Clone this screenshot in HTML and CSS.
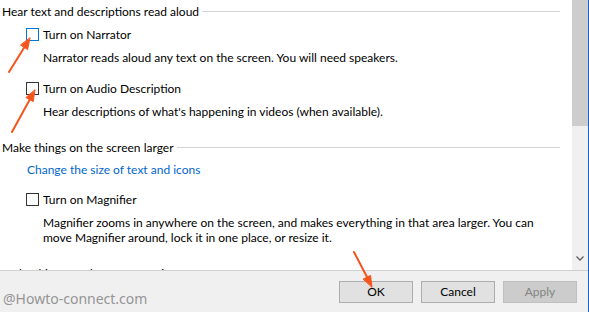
FILE: index.html
```html
<!DOCTYPE html>
<html lang="en">
<head>
  <meta charset="UTF-8">
  <title>Ease of Access</title>
  <link rel="stylesheet" href="styles.css">
</head>
<body>
<div class="window">
  <div class="content">
    <div class="panel">
      <div class="section-title first">Hear text and descriptions read aloud</div>
      <div class="option first">
        <label class="check-row"><span class="box focused"></span>Turn on Narrator</label>
        <div class="desc">Narrator reads aloud any text on the screen. You will need speakers.</div>
      </div>
      <div class="option">
        <label class="check-row"><span class="box"></span>Turn on Audio Description</label>
        <div class="desc">Hear descriptions of what's happening in videos (when available).</div>
      </div>

      <div class="section-title">Make things on the screen larger</div>
      <a href="#" class="link">Change the size of text and icons</a>
      <div class="option after-link">
        <label class="check-row"><span class="box"></span>Turn on Magnifier</label>
        <div class="desc wide">Magnifier zooms in anywhere on the screen, and makes everything in that area larger. You can move Magnifier around, lock it in one place, or resize it.</div>
      </div>

      <div class="section-title">Make things on the screen easier to see</div>
    </div>
    <div class="scrollbar">
      <div class="thumb"></div>
      <div class="track"></div>
      <div class="arrow-down">
        <svg width="8" height="5" viewBox="0 0 8 5"><path d="M0.5 0.5 L4 4 L7.5 0.5" fill="none" stroke="#606060" stroke-width="1.3"/></svg>
      </div>
    </div>
  </div>
  <div class="footer">
    <div class="watermark">@Howto-connect.com</div>
    <div class="buttons">
      <button class="btn">OK</button>
      <button class="btn">Cancel</button>
      <button class="btn" disabled>Apply</button>
    </div>
  </div>
</div>

<svg class="arrows" width="589" height="312" viewBox="0 0 589 312">
  <g stroke="#f5541d" stroke-width="2" stroke-linecap="round" fill="#f5541d">
    <line x1="9" y1="72" x2="24.5" y2="47"/>
    <polygon points="30,38 27.6,49.5 20.8,45.2" stroke-width="1"/>
    <line x1="12" y1="132" x2="29.8" y2="99.6"/>
    <polygon points="35,90 33.2,101.6 26.2,97.7" stroke-width="1"/>
    <line x1="354" y1="252" x2="367" y2="277"/>
    <polygon points="372,287 370.5,275.4 363.4,279" stroke-width="1"/>
  </g>
</svg>
</body>
</html>
```
FILE: styles.css
```css
body {
  margin: 0;
  width: 589px;
  height: 312px;
  overflow: hidden;
  position: relative;
  font-family: 'Lato', sans-serif;
  font-size: 12px;
  color: #000;
  background-color: #f0f0f0;
}
.window {
  display: flex;
  flex-direction: column;
  height: 312px;
  border-right: 1px solid #1a64c8;
  box-sizing: border-box;
}
.content {
  display: flex;
  height: 270px;
}
.panel {
  flex: 1;
  background-color: #fff;
  padding: 4px 12px 0 2px;
  overflow: hidden;
  line-height: 15px;
}
.section-title {
  display: flex;
  align-items: center;
  margin-top: 21px;
  white-space: nowrap;
}
.section-title.first {
  margin-top: 0;
}
.section-title::after {
  content: '';
  flex: 1;
  height: 1px;
  margin-left: 3px;
  background-color: #d4d4d4;
}
.option {
  margin-top: 16px;
  padding-left: 24px;
}
.option.first {
  margin-top: 8px;
}
.option.after-link {
  margin-top: 15px;
}
.check-row {
  display: flex;
  align-items: center;
  gap: 4px;
}
.box {
  width: 11px;
  height: 11px;
  border: 1px solid #333;
  background-color: #fff;
}
.box.focused {
  border-color: #0078d7;
}
.desc {
  margin-top: 8px;
  padding-left: 17px;
}
.desc.wide {
  width: 500px;
}
.link {
  display: block;
  margin-top: 7px;
  padding-left: 25px;
  color: #0066cc;
  text-decoration: none;
}
.scrollbar {
  width: 16px;
  display: flex;
  flex-direction: column;
  background-color: #f0f0f0;
}
.thumb {
  height: 126px;
  background-color: #cdcdcd;
}
.track {
  flex: 1;
}
.arrow-down {
  height: 14px;
  display: flex;
  justify-content: center;
  align-items: flex-start;
  padding-top: 0;
}
.footer {
  flex: 1;
  display: flex;
  justify-content: space-between;
  align-items: center;
  border-top: 1px solid #cfcfcf;
  padding: 0 11px 0 3px;
}
.watermark {
  font-family: 'Noto Sans', sans-serif;
  font-size: 14px;
  color: #959595;
  padding-top: 14px;
}
.buttons {
  display: flex;
  gap: 8px;
}
.btn {
  width: 74px;
  height: 22px;
  padding: 0;
  font-family: 'Lato', sans-serif;
  font-size: 12px;
  color: #000;
  background-color: #e1e1e1;
  border: 1px solid #adadad;
}
.btn:disabled {
  color: #838383;
  background-color: #cccccc;
  border-color: #bfbfbf;
}
.arrows {
  position: absolute;
  left: 0;
  top: 0;
  pointer-events: none;
}
```
